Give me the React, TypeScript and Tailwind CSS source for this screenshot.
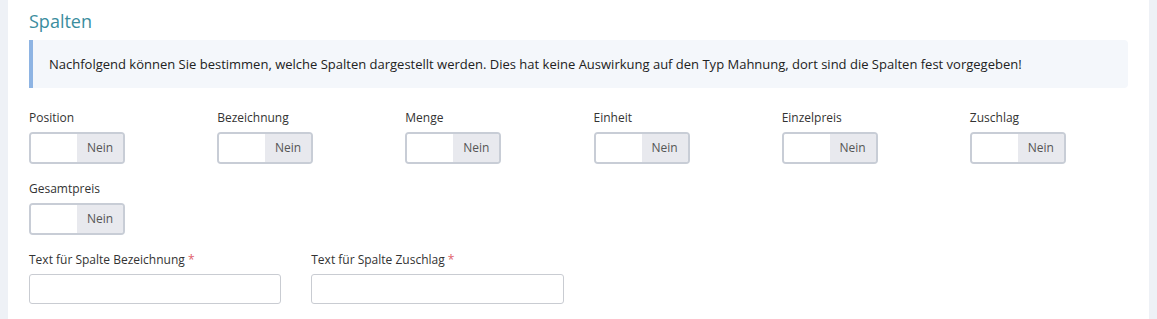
const columns = ["Position", "Bezeichnung", "Menge", "Einheit", "Einzelpreis", "Zuschlag", "Gesamtpreis"];

function Toggle() {
  return (
    <div className="flex h-[32px] w-[96px] overflow-hidden rounded-[4px] border-2 border-[#c8cdd6] bg-white">
      <div className="w-[46px] bg-white" />
      <div className="flex flex-1 items-center justify-center bg-[#e8e9ee] text-[12px] text-[#555]">Nein</div>
    </div>
  );
}

function TextField({ label }: { label: string }) {
  return (
    <div className="px-[15px]">
      <label className="mb-[5px] block text-[12px] leading-[18px] text-[#333]">
        {label} <span className="text-[#e0606a]">*</span>
      </label>
      <input type="text" className="h-[30px] w-full rounded-[3px] border border-[#c9ccd2] bg-white outline-none" />
    </div>
  );
}

export default function App() {
  return (
    <div className="flex min-h-[319px] bg-[#eef1f6] pl-[8px] pr-[8px]" style={{ fontFamily: '"Open Sans", sans-serif' }}>
      <div className="flex-1 bg-white px-[21px] pt-[8px] pb-[16px]">
        <h2 className="mb-[6px] text-[18px] leading-[26px] text-[#3a8d9e]">Spalten</h2>
        <div className="rounded-r-[4px] border-l-4 border-[#8eb4e3] bg-[#f4f7fb] py-[15px] pl-[16px] text-[13px] leading-[18px] text-[#222]">
          Nachfolgend können Sie bestimmen, welche Spalten dargestellt werden. Dies hat keine Auswirkung auf den Typ Mahnung, dort sind die Spalten fest vorgegeben!
        </div>
        <div className="mx-[-15px] mt-[21px] grid grid-cols-6">
          {columns.map((c) => (
            <div key={c} className="mb-[16px] px-[15px]">
              <div className="mb-[5px] text-[12px] leading-[18px] text-[#333]">{c}</div>
              <Toggle />
            </div>
          ))}
        </div>
        <div className="mx-[-15px] grid grid-cols-4">
          <TextField label="Text für Spalte Bezeichnung" />
          <TextField label="Text für Spalte Zuschlag" />
        </div>
      </div>
    </div>
  );
}
